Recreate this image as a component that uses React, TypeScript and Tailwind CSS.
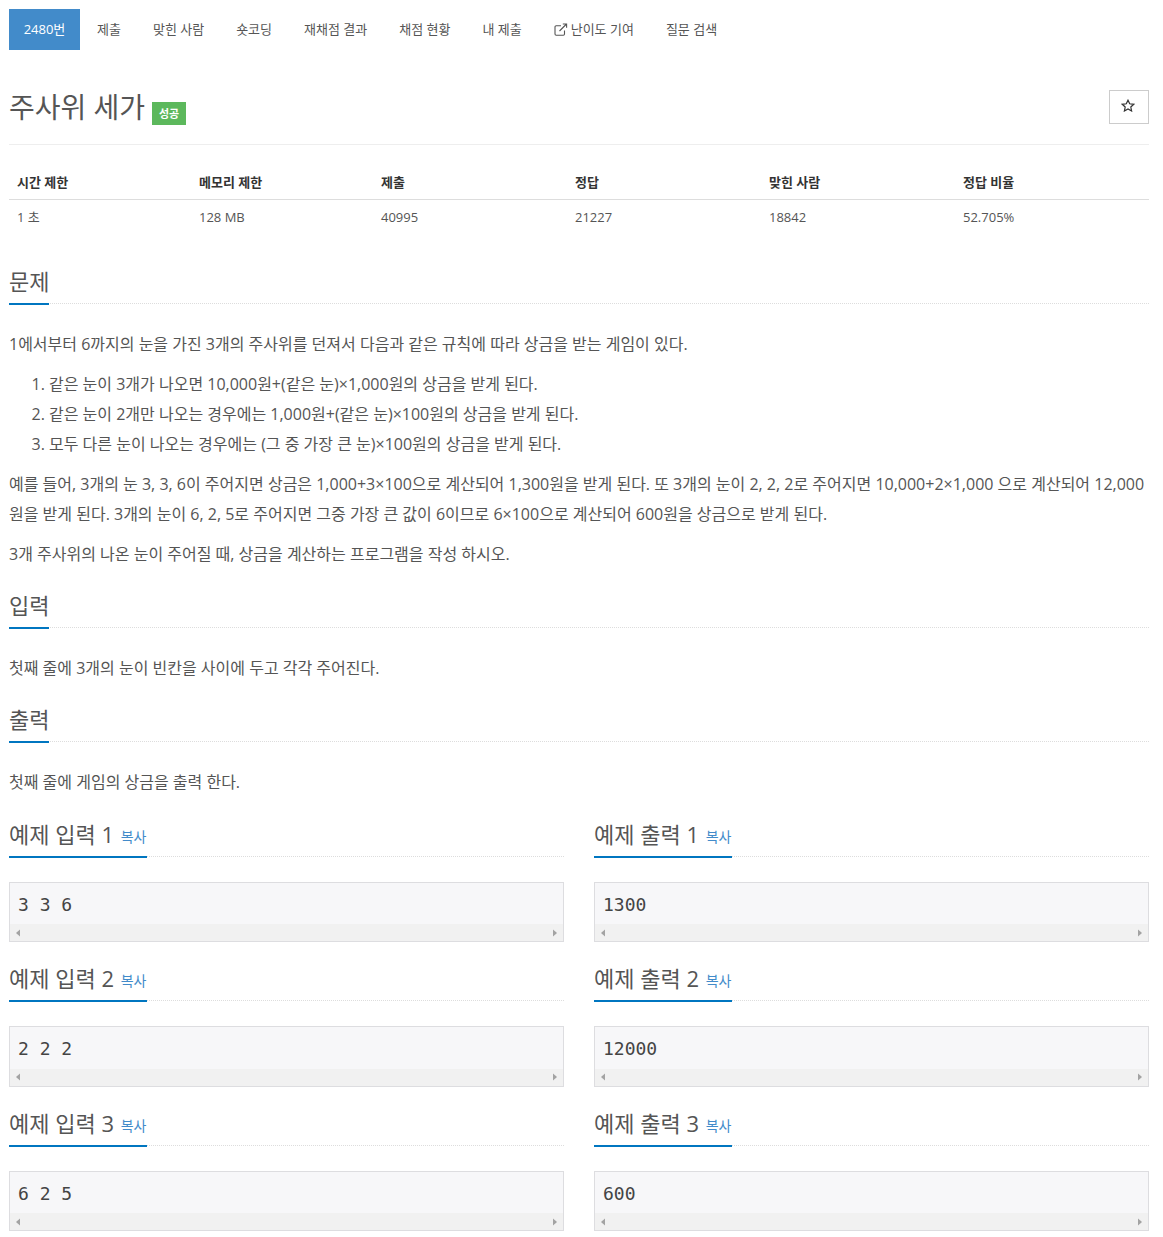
import React from "react";

function Head({ children, pb }: { children: React.ReactNode; pb: string }) {
  return (
    <div className="border-b border-dotted border-[#dddddd]">
      <h2 className={`inline-block text-[22px] leading-[33px] font-normal text-[#555555] border-b-2 border-[#0076c0] mb-[-2px] align-bottom ${pb}`}>{children}</h2>
    </div>
  );
}

function Caret({ dir }: { dir: "l" | "r" }) {
  return (
    <svg width="6" height="8" viewBox="0 0 6 8" className="block">
      <path d={dir === "l" ? "M5 0.5V7.5L1 4Z" : "M1 0.5V7.5L5 4Z"} fill="#a3a3a3" />
    </svg>
  );
}

function Sample({ title, n, value }: { title: string; n: number; value: string }) {
  return (
    <div className="w-[555px]">
      <Head pb="pb-[3px]">
        {title} {n} <a className="text-[14px] text-[#428bca] ml-[1px] pr-[1px] align-[1px]">복사</a>
      </Head>
      <div className="mt-[25px] h-[60.4px] border border-[#dddde0] bg-[#f7f7f9] flex flex-col">
        <pre className="flex-1 px-[8px] pt-[9px] text-[18px] leading-[25px] text-[#444444] font-['DejaVu_Sans_Mono','Liberation_Mono',monospace]">{value}</pre>
        <div className="h-[17px] bg-[#f1f1f1] flex items-center justify-between px-[5px]">
          <Caret dir="l" />
          <Caret dir="r" />
        </div>
      </div>
    </div>
  );
}

const navs = ["제출", "맞힌 사람", "숏코딩", "재채점 결과", "채점 현황", "내 제출"];

export default function App() {
  return (
    <div className="w-[1163px] h-[1237px] overflow-hidden bg-white pl-[9px] pt-[9px] text-[#555555] font-['Open_Sans','Noto_Sans_CJK_KR',sans-serif] text-[14px]">
      <div className="w-[1140px]">
        <nav className="flex gap-[2px] text-[13px] h-[41px]">
          <a className="bg-[#428bca] text-white w-[71px] flex items-center justify-center">2480번</a>
          {navs.map((t) => (
            <a key={t} className="px-[15px] flex items-center">{t}</a>
          ))}
          <a className="px-[15px] flex items-center gap-[3px]">
            <svg width="14" height="13" viewBox="0 0 14 13" fill="none" stroke="#555555" strokeWidth="1.1">
              <path d="M10.5 7.5V11a1.2 1.2 0 0 1-1.2 1.2H2.2A1.2 1.2 0 0 1 1 11V4a1.2 1.2 0 0 1 1.2-1.2H7" />
              <path d="M5.5 8 12.5 1M8.8 1h3.8v3.8" />
            </svg>
            난이도 기여
          </a>
          <a className="px-[15px] flex items-center">질문 검색</a>
        </nav>

        <div className="mt-[40px] h-[55px] border-b border-[#eeeeee] flex justify-between items-start">
          <div className="flex items-start">
            <h1 className="text-[28px] leading-[36px] mt-[-1px] font-normal text-[#555555]">주사위 세가</h1>
            <span className="ml-[7px] mt-[12px] w-[34px] h-[23px] pt-[1px] bg-[#5cb85c] text-white text-[11px] font-bold flex items-center justify-center">성공</span>
          </div>
          <button className="w-[40px] h-[34px] pb-[3px] pr-[2px] border border-[#cccccc] flex items-center justify-center">
            <svg width="14" height="13" viewBox="0 0 14 13" fill="none" stroke="#333333" strokeWidth="1.2">
              <path d="M7 1.2 8.7 4.8 12.7 5.3 9.8 8 10.6 12 7 10 3.4 12 4.2 8 1.3 5.3 5.3 4.8Z" />
            </svg>
          </button>
        </div>

        <table className="w-[1140px] mt-[20px] table-fixed text-[13px]">
          <thead>
            <tr className="text-left text-[#333333]">
              {[
                ["시간 제한", "w-[182px]"],
                ["메모리 제한", "w-[182px]"],
                ["제출", "w-[194px]"],
                ["정답", "w-[194px]"],
                ["맞힌 사람", "w-[194px]"],
                ["정답 비율", "w-[194px]"],
              ].map(([t, w]) => (
                <th key={t} className={`${w} px-[8px] pt-[1px] h-[34px] font-bold border-b border-[#dddddd]`}>{t}</th>
              ))}
            </tr>
          </thead>
          <tbody>
            <tr>
              {["1 초", "128 MB", "40995", "21227", "18842", "52.705%"].map((t) => (
                <td key={t} className="px-[8px] h-[36px]">{t}</td>
              ))}
            </tr>
          </tbody>
        </table>

        <section className="mt-[30px]">
          <Head pb="pb-[5px]">문제</Head>
          <div className="mt-[25px] text-[16px] leading-[30px]">
            <p>1에서부터 6까지의 눈을 가진 3개의 주사위를 던져서 다음과 같은 규칙에 따라 상금을 받는 게임이 있다.</p>
            <ol className="list-decimal pl-[40px] mt-[10px]">
              <li>같은 눈이 3개가 나오면 10,000원+(같은 눈)×1,000원의 상금을 받게 된다.</li>
              <li>같은 눈이 2개만 나오는 경우에는 1,000원+(같은 눈)×100원의 상금을 받게 된다.</li>
              <li>모두 다른 눈이 나오는 경우에는 (그 중 가장 큰 눈)×100원의 상금을 받게 된다.</li>
            </ol>
            <p className="mt-[10px]">예를 들어, 3개의 눈 3, 3, 6이 주어지면 상금은 1,000+3×100으로 계산되어 1,300원을 받게 된다. 또 3개의 눈이 2, 2, 2로 주어지면 10,000+2×1,000 으로 계산되어 12,000원을 받게 된다. 3개의 눈이 6, 2, 5로 주어지면 그중 가장 큰 값이 6이므로 6×100으로 계산되어 600원을 상금으로 받게 된다.</p>
            <p className="mt-[10px]">3개 주사위의 나온 눈이 주어질 때, 상금을 계산하는 프로그램을 작성 하시오.</p>
          </div>
        </section>

        <section className="mt-[20px]">
          <Head pb="pb-[5px]">입력</Head>
          <p className="mt-[25px] text-[16px] leading-[30px]">첫째 줄에 3개의 눈이 빈칸을 사이에 두고 각각 주어진다.</p>
        </section>

        <section className="mt-[20px]">
          <Head pb="pb-[5px]">출력</Head>
          <p className="mt-[25px] text-[16px] leading-[30px]">첫째 줄에 게임의 상금을 출력 한다.</p>
        </section>

        <div className="mt-[21px] flex flex-col gap-[20px]">
          <div className="flex gap-[30px]">
            <Sample title="예제 입력" n={1} value="3 3 6" />
            <Sample title="예제 출력" n={1} value="1300" />
          </div>
          <div className="flex gap-[30px]">
            <Sample title="예제 입력" n={2} value="2 2 2" />
            <Sample title="예제 출력" n={2} value="12000" />
          </div>
          <div className="flex gap-[30px]">
            <Sample title="예제 입력" n={3} value="6 2 5" />
            <Sample title="예제 출력" n={3} value="600" />
          </div>
        </div>
      </div>
    </div>
  );
}
